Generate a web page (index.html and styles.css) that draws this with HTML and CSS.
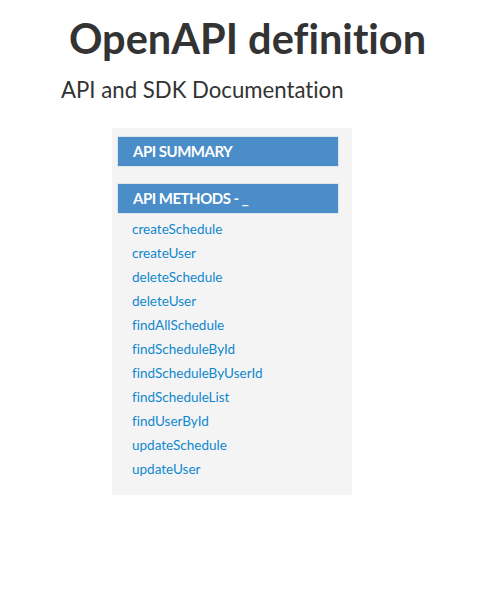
FILE: index.html
```html
<!DOCTYPE html>
<html lang="en">
<head>
<meta charset="utf-8">
<title>OpenAPI definition</title>
<link rel="stylesheet" href="styles.css">
</head>
<body>
<header class="page-head">
  <h1 class="title">OpenAPI definition</h1>
  <p class="subtitle">API and SDK Documentation</p>
</header>
<nav class="sidebar">
  <div class="nav-header">API SUMMARY</div>
  <div class="nav-header">API METHODS - _</div>
  <ul class="methods">
    <li><a href="#">createSchedule</a></li>
    <li><a href="#">createUser</a></li>
    <li><a href="#">deleteSchedule</a></li>
    <li><a href="#">deleteUser</a></li>
    <li><a href="#">findAllSchedule</a></li>
    <li><a href="#">findScheduleById</a></li>
    <li><a href="#">findScheduleByUserId</a></li>
    <li><a href="#">findScheduleList</a></li>
    <li><a href="#">findUserById</a></li>
    <li><a href="#">updateSchedule</a></li>
    <li><a href="#">updateUser</a></li>
  </ul>
</nav>
</body>
</html>
```
FILE: styles.css
```css
html, body {
  margin: 0;
  padding: 0;
  background: #ffffff;
}
body {
  font-family: Lato, "Liberation Sans", sans-serif;
  font-variant-ligatures: none;
  color: #333333;
}
.page-head {
  padding-top: 14px;
}
.title {
  margin: 0;
  padding-left: 18px;
  text-align: center;
  font-size: 41.5px;
  font-weight: 700;
  line-height: 48px;
  color: #333333;
}
.subtitle {
  margin: 14px 0 0 61px;
  font-size: 22.2px;
  line-height: 28px;
  font-weight: 400;
}
.sidebar {
  width: 240px;
  margin: 24px 0 0 112px;
  padding: 8px 0 14px 5px;
  box-sizing: border-box;
  background: #f4f4f4;
}
.nav-header {
  width: 222px;
  box-sizing: border-box;
  height: 31px;
  padding-left: 15px;
  border: 1px solid #dde4ea;
  background: #4a8dc8;
  color: #ffffff;
  font-size: 15px;
  letter-spacing: -0.5px;
  font-weight: 700;
  line-height: 29px;
  margin-bottom: 16px;
}
.nav-header + .nav-header {
  margin-bottom: 3px;
}
.methods {
  list-style: none;
  margin: 0;
  padding: 0 0 0 15px;
}
.methods li {
  height: 24px;
  line-height: 24px;
  font-size: 13.5px;
}
.methods a {
  color: #0f88cf;
  text-decoration: none;
}
```
